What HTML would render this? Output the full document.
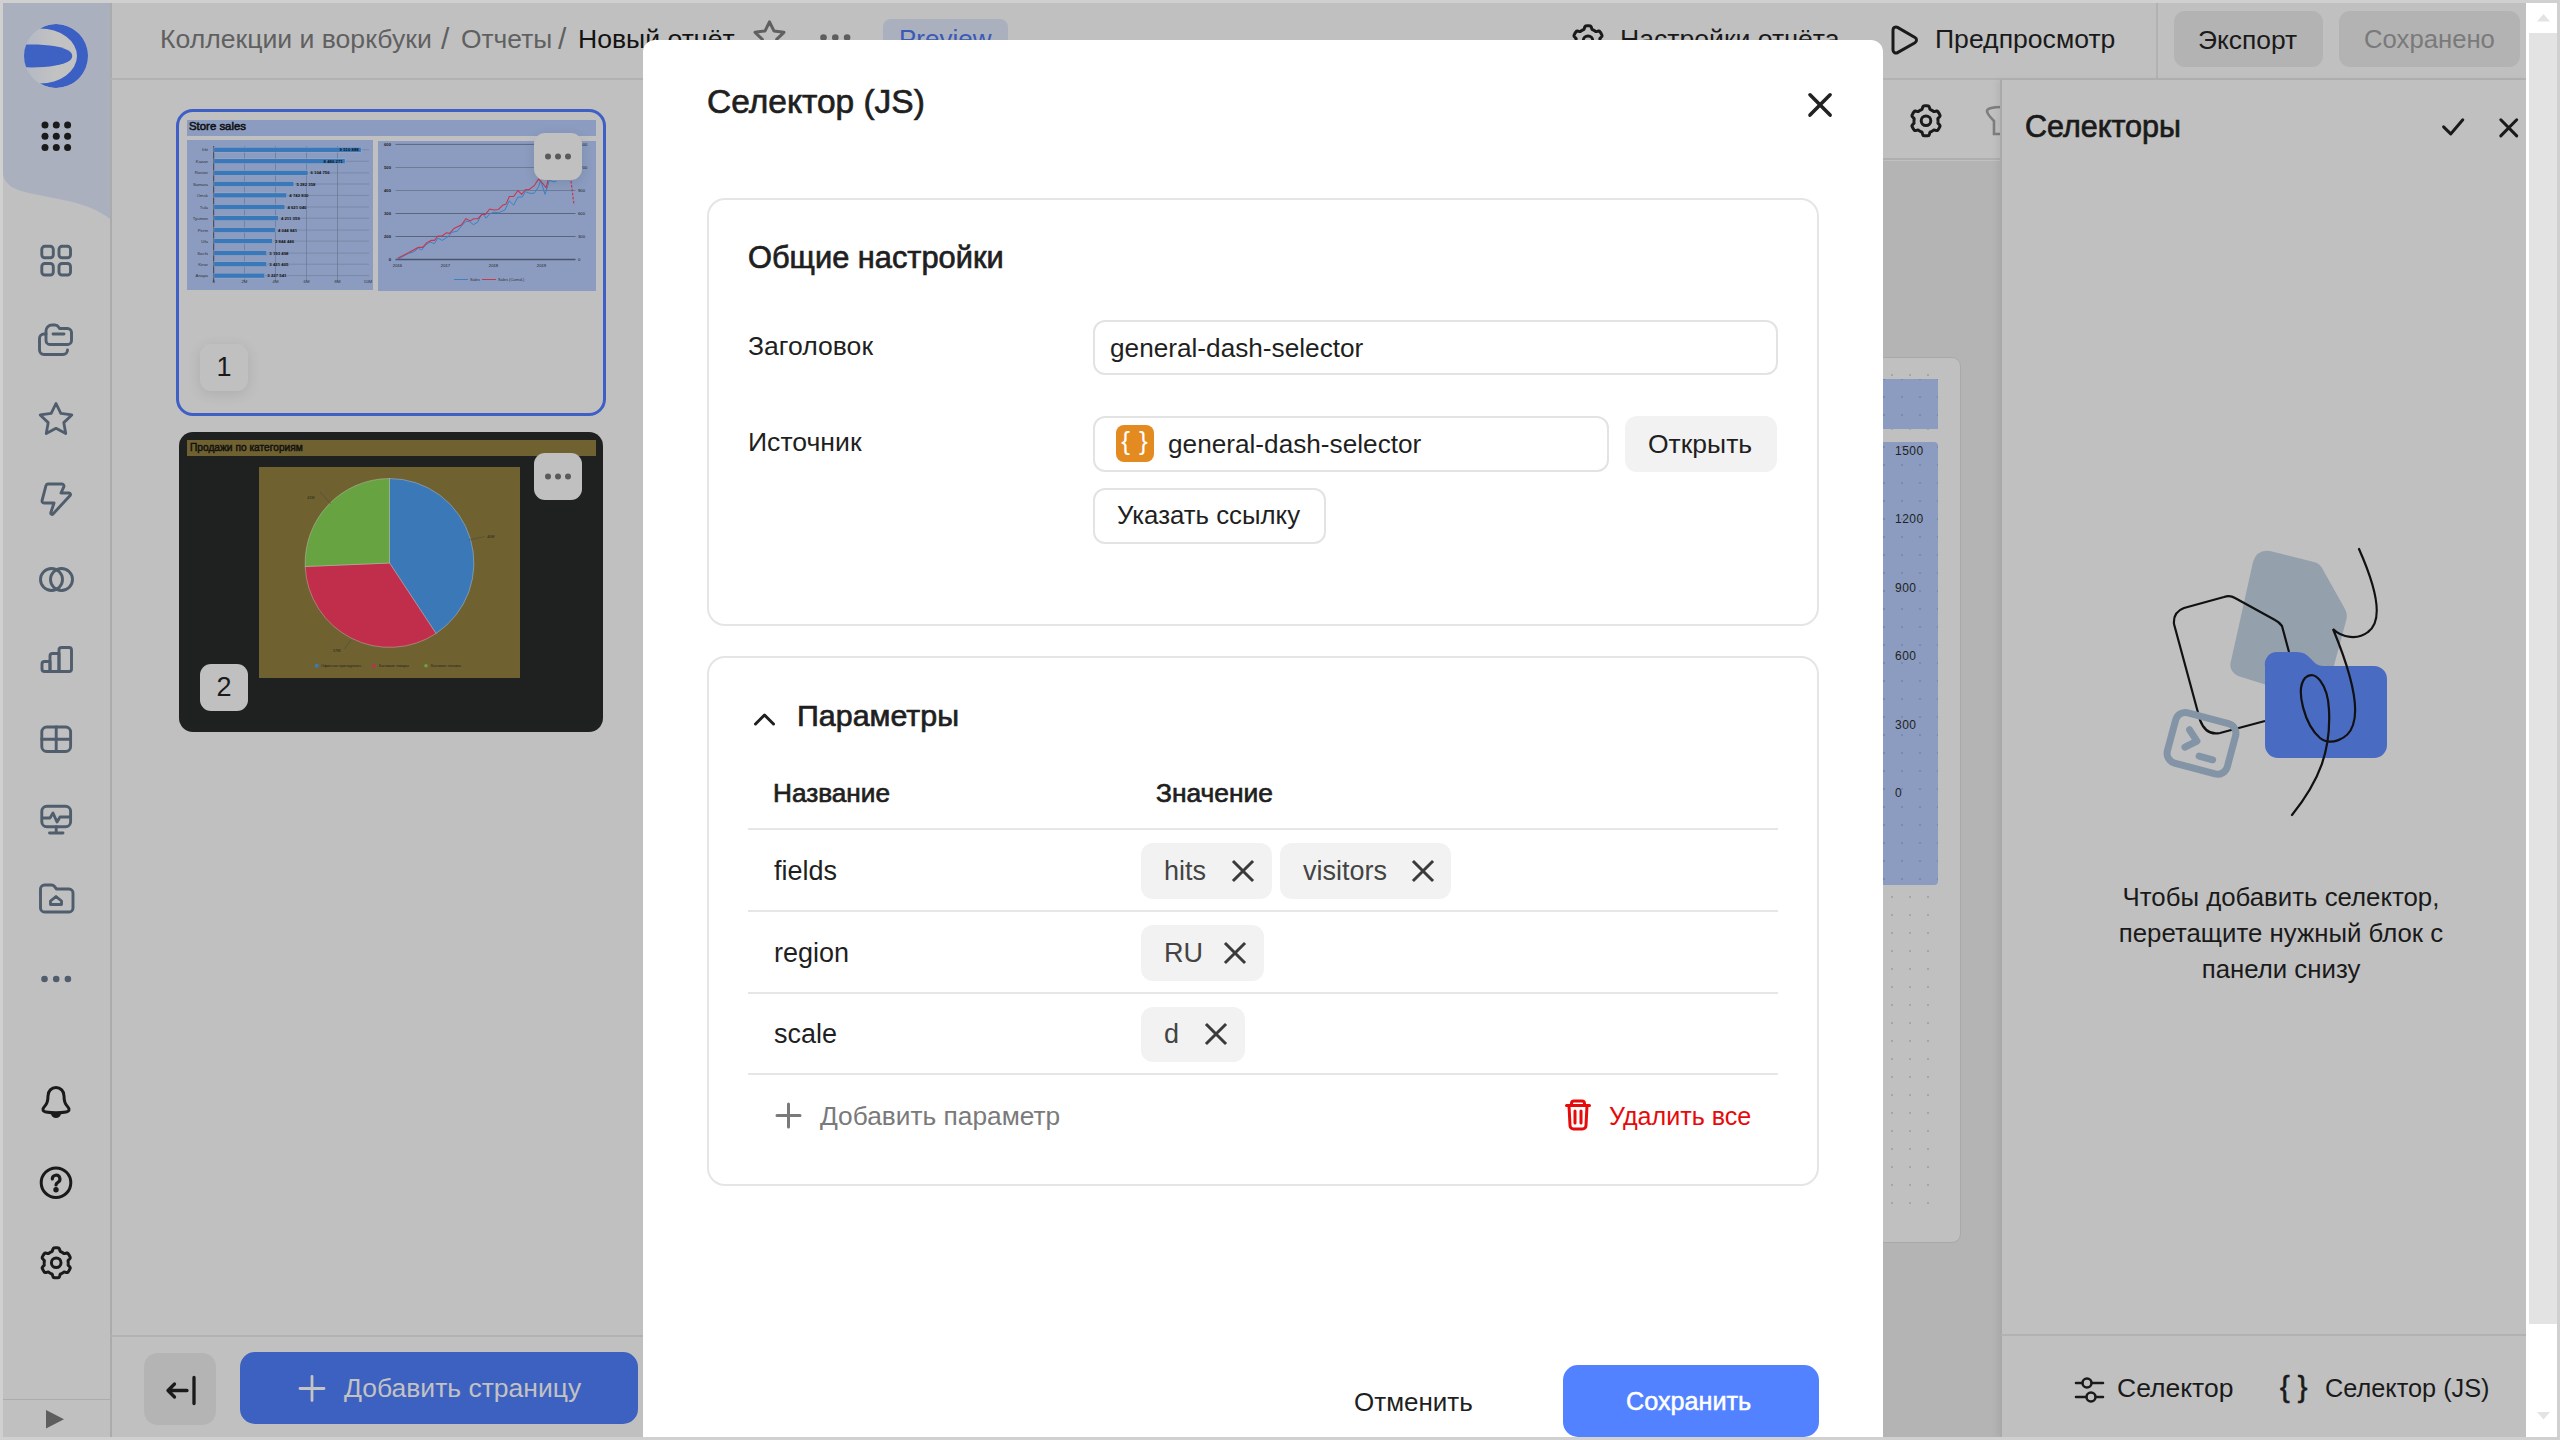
<!DOCTYPE html>
<html><head><meta charset="utf-8">
<style>
*{box-sizing:border-box}
html,body{margin:0;padding:0}
body{width:2560px;height:1440px;overflow:hidden;position:relative;background:#d0d0d0;font-family:"Liberation Sans",sans-serif;color:#1b1b1b}
.a{position:absolute}
.t{position:absolute;white-space:nowrap;line-height:1}
svg{position:absolute;overflow:visible}
.m{-webkit-text-stroke:0.7px currentColor}
</style></head><body>

<!-- app background -->
<div class="a" style="left:3px;top:3px;width:2523px;height:1434px;background:#c0c0c0"></div>

<!-- ============ SIDEBAR ============ -->
<svg style="left:0;top:0" width="112" height="230">
  <path d="M3,3 H110 V219 C100,211 86,205 68,201 L29,193 C16,190 5,186 3,174 Z" fill="#aab0be"/>
</svg>
<div class="a" style="left:110px;top:3px;width:2px;height:1434px;background:rgba(0,0,0,0.11)"></div>
<!-- logo -->
<svg style="left:24px;top:24px" width="64" height="64" viewBox="0 0 64 64">
  <defs><clipPath id="lc"><circle cx="32" cy="32" r="32"/></clipPath>
  <linearGradient id="lg" x1="0" y1="0" x2="1" y2="0"><stop offset="0" stop-color="#b3b8c4"/><stop offset="0.5" stop-color="#c2c2c2"/></linearGradient></defs>
  <g clip-path="url(#lc)">
    <rect width="64" height="64" fill="url(#lg)"/>
    <path d="M16,4.5 A32,32 0 1 1 16,59.5 A37,27.5 0 0 0 16,4.5 Z" fill="#3b5fc3"/>
    <path d="M-2,20.8 C18,19.8 40,22 46.5,28 Q50,32 46.5,36 C40,42 18,44.2 -2,43.2 Z" fill="#3d62c3"/>
  </g>
</svg>
<!-- apps dots -->
<svg style="left:0;top:0" width="112" height="160" fill="#1a1a1a">
  <circle cx="45" cy="125" r="3.5"/><circle cx="56.3" cy="125" r="3.5"/><circle cx="67.6" cy="125" r="3.5"/>
  <circle cx="45" cy="136.3" r="3.5"/><circle cx="56.3" cy="136.3" r="3.5"/><circle cx="67.6" cy="136.3" r="3.5"/>
  <circle cx="45" cy="147.6" r="3.5"/><circle cx="56.3" cy="147.6" r="3.5"/><circle cx="67.6" cy="147.6" r="3.5"/>
</svg>

<!-- sidebar icons -->
<svg style="left:0;top:0" width="112" height="1440" fill="none" stroke="#4f5d6c" stroke-width="2.9" stroke-linecap="round" stroke-linejoin="round">
  <!-- grid -->
  <rect x="41.8" y="246.3" width="11.5" height="11.5" rx="3"/>
  <rect x="59" y="246.3" width="11.5" height="11.5" rx="3"/>
  <rect x="41.8" y="263.5" width="11.5" height="11.5" rx="3"/>
  <rect x="59" y="263.5" width="11.5" height="11.5" rx="3"/>
  <!-- collections -->
  <path d="M46,332 V331 a6,6 0 0 1 6,-6 h3 a4,4 0 0 1 3.5,2 l1,1.5 h8 a4,4 0 0 1 4,4 v8 a4,4 0 0 1 -4,4 h-17.5 a4,4 0 0 1 -4,-4 z"/>
  <path d="M46,334 h-2 a4.5,4.5 0 0 0 -4.5,4.5 v11.5 a4.5,4.5 0 0 0 4.5,4.5 h19 a4.5,4.5 0 0 0 4.5,-4.5"/>
  <path d="M53,334 h11"/>
  <!-- star -->
  <path d="M56.00,403.50 L60.82,413.47 L71.79,414.97 L63.80,422.63 L65.76,433.53 L56.00,428.30 L46.24,433.53 L48.20,422.63 L40.21,414.97 L51.18,413.47 Z" stroke-width="2.8"/>
  <!-- bolt -->
  <path d="M48,484 H62 a2,2 0 0 1 1.8,2.8 L61,493 H69 a1.5,1.5 0 0 1 1.1,2.5 L53,514 a1.3,1.3 0 0 1 -2.2,-1.2 L54,503 H44 a2,2 0 0 1 -1.9,-2.6 L46,485.5 a2,2 0 0 1 2,-1.5 Z"/>
  <!-- rings -->
  <circle cx="51.5" cy="579.5" r="11"/><circle cx="61.5" cy="579.5" r="11"/>
  <!-- bars -->
  <path d="M42,664 a2.5,2.5 0 0 1 2.5,-2.5 H50 V671.5 H44.5 a2.5,2.5 0 0 1 -2.5,-2.5 Z"/>
  <path d="M50,671.5 V656 a2.5,2.5 0 0 1 2.5,-2.5 H59 V671.5 Z"/>
  <path d="M59,671.5 V650 a2.5,2.5 0 0 1 2.5,-2.5 H69 a2.5,2.5 0 0 1 2.5,2.5 V669 a2.5,2.5 0 0 1 -2.5,2.5 Z"/>
  <!-- table grid -->
  <rect x="41.8" y="727" width="28.8" height="24.5" rx="5"/>
  <path d="M56.2,727 V751.5 M41.8,739.3 H70.6"/>
  <!-- monitor -->
  <rect x="41.8" y="806.3" width="28.8" height="20.5" rx="5"/>
  <path d="M56.2,826.8 V833 M49.5,833 H63 M42.5,818 H50 L53,813 L57,822 L60,817 H70"/>
  <!-- folder -->
  <path d="M40.5,889 a4,4 0 0 1 4,-4 h7 a4,4 0 0 1 3,1.5 l2,2.5 h12.5 a4,4 0 0 1 4,4 v15 a4,4 0 0 1 -4,4 h-24.5 a4,4 0 0 1 -4,-4 z"/>
  <path d="M50.5,904.5 V901 L56,896.5 L61.5,901 V904.5 Z"/>
</svg>
<svg style="left:0;top:0" width="112" height="1000" fill="#4f5d6c">
  <circle cx="44.5" cy="979" r="3.3"/><circle cx="56.2" cy="979" r="3.3"/><circle cx="67.9" cy="979" r="3.3"/>
</svg>
<!-- bottom sidebar icons -->
<svg style="left:0;top:0" width="112" height="1440" fill="none" stroke="#1a1a1a" stroke-width="3" stroke-linecap="round" stroke-linejoin="round">
  <path d="M44.5,1106.5 C47.5,1103.5 48,1100 48,1096 C48,1091 51.5,1087.5 56,1087.5 C60.5,1087.5 64,1091 64,1096 C64,1100 64.5,1103.5 67.5,1106.5 C70,1109 69.5,1111.5 66,1112 C60,1113 52,1113 46,1112 C42.5,1111.5 42,1109 44.5,1106.5 Z"/>
  <path d="M52.5,1113.5 a3.5,3 0 0 0 7,0 Z" fill="#1a1a1a"/>
  <circle cx="56" cy="1182.7" r="14.8"/>
  <path d="M52.3,1179 a3.8,3.8 0 1 1 5.6,3.3 c-1.2,0.7 -1.9,1.3 -1.9,2.7" stroke-width="3.2"/>
  <circle cx="56" cy="1189.8" r="1.2" fill="#1a1a1a"/>
  <path d="M68.20,1262.80 L68.20,1263.01 L68.19,1263.22 L68.18,1263.43 L68.17,1263.64 L68.15,1263.85 L68.13,1264.05 L68.11,1264.26 L68.08,1264.47 L68.05,1264.68 L68.07,1264.89 L68.18,1265.13 L68.37,1265.39 L68.62,1265.67 L68.92,1265.97 L69.24,1266.29 L69.55,1266.63 L69.83,1266.97 L70.05,1267.30 L70.19,1267.62 L70.25,1267.91 L70.20,1268.18 L70.11,1268.42 L70.01,1268.66 L69.90,1268.90 L69.79,1269.14 L69.68,1269.38 L69.57,1269.61 L69.44,1269.84 L69.32,1270.07 L69.19,1270.30 L69.06,1270.53 L68.92,1270.75 L68.78,1270.97 L68.64,1271.19 L68.49,1271.40 L68.34,1271.62 L68.18,1271.83 L68.02,1272.03 L67.86,1272.24 L67.65,1272.41 L67.37,1272.51 L67.02,1272.54 L66.62,1272.52 L66.19,1272.45 L65.75,1272.35 L65.31,1272.23 L64.90,1272.12 L64.52,1272.04 L64.20,1272.01 L63.95,1272.03 L63.75,1272.13 L63.59,1272.26 L63.42,1272.38 L63.25,1272.51 L63.08,1272.63 L62.91,1272.75 L62.74,1272.86 L62.56,1272.98 L62.38,1273.09 L62.20,1273.19 L62.02,1273.30 L61.83,1273.40 L61.65,1273.49 L61.46,1273.59 L61.27,1273.68 L61.08,1273.76 L60.89,1273.85 L60.70,1273.93 L60.50,1274.00 L60.32,1274.12 L60.17,1274.34 L60.04,1274.63 L59.93,1274.99 L59.81,1275.40 L59.69,1275.84 L59.56,1276.28 L59.41,1276.68 L59.23,1277.04 L59.02,1277.33 L58.80,1277.52 L58.55,1277.62 L58.29,1277.65 L58.03,1277.69 L57.77,1277.72 L57.51,1277.74 L57.25,1277.76 L56.99,1277.78 L56.72,1277.79 L56.46,1277.80 L56.20,1277.80 L55.94,1277.80 L55.68,1277.79 L55.41,1277.78 L55.15,1277.76 L54.89,1277.74 L54.63,1277.72 L54.37,1277.69 L54.11,1277.65 L53.85,1277.62 L53.60,1277.52 L53.38,1277.33 L53.17,1277.04 L52.99,1276.68 L52.84,1276.28 L52.71,1275.84 L52.59,1275.40 L52.47,1274.99 L52.36,1274.63 L52.23,1274.34 L52.08,1274.12 L51.90,1274.00 L51.70,1273.93 L51.51,1273.85 L51.32,1273.76 L51.13,1273.68 L50.94,1273.59 L50.75,1273.49 L50.57,1273.40 L50.38,1273.30 L50.20,1273.19 L50.02,1273.09 L49.84,1272.98 L49.66,1272.86 L49.49,1272.75 L49.32,1272.63 L49.15,1272.51 L48.98,1272.38 L48.81,1272.26 L48.65,1272.13 L48.45,1272.03 L48.20,1272.01 L47.88,1272.04 L47.50,1272.12 L47.09,1272.23 L46.65,1272.35 L46.21,1272.45 L45.78,1272.52 L45.38,1272.54 L45.03,1272.51 L44.75,1272.41 L44.54,1272.24 L44.38,1272.03 L44.22,1271.83 L44.06,1271.62 L43.91,1271.40 L43.76,1271.19 L43.62,1270.97 L43.48,1270.75 L43.34,1270.53 L43.21,1270.30 L43.08,1270.07 L42.96,1269.84 L42.83,1269.61 L42.72,1269.38 L42.61,1269.14 L42.50,1268.90 L42.39,1268.66 L42.29,1268.42 L42.20,1268.18 L42.15,1267.91 L42.21,1267.62 L42.35,1267.30 L42.57,1266.97 L42.85,1266.63 L43.16,1266.29 L43.48,1265.97 L43.78,1265.67 L44.03,1265.39 L44.22,1265.13 L44.33,1264.89 L44.35,1264.68 L44.32,1264.47 L44.29,1264.26 L44.27,1264.05 L44.25,1263.85 L44.23,1263.64 L44.22,1263.43 L44.21,1263.22 L44.20,1263.01 L44.20,1262.80 L44.20,1262.59 L44.21,1262.38 L44.22,1262.17 L44.23,1261.96 L44.25,1261.75 L44.27,1261.55 L44.29,1261.34 L44.32,1261.13 L44.35,1260.92 L44.33,1260.71 L44.22,1260.47 L44.03,1260.21 L43.78,1259.93 L43.48,1259.63 L43.16,1259.31 L42.85,1258.97 L42.57,1258.63 L42.35,1258.30 L42.21,1257.98 L42.15,1257.69 L42.20,1257.42 L42.29,1257.18 L42.39,1256.94 L42.50,1256.70 L42.61,1256.46 L42.72,1256.22 L42.83,1255.99 L42.96,1255.76 L43.08,1255.53 L43.21,1255.30 L43.34,1255.07 L43.48,1254.85 L43.62,1254.63 L43.76,1254.41 L43.91,1254.20 L44.06,1253.98 L44.22,1253.77 L44.38,1253.57 L44.54,1253.36 L44.75,1253.19 L45.03,1253.09 L45.38,1253.06 L45.78,1253.08 L46.21,1253.15 L46.65,1253.25 L47.09,1253.37 L47.50,1253.48 L47.88,1253.56 L48.20,1253.59 L48.45,1253.57 L48.65,1253.47 L48.81,1253.34 L48.98,1253.22 L49.15,1253.09 L49.32,1252.97 L49.49,1252.85 L49.66,1252.74 L49.84,1252.62 L50.02,1252.51 L50.20,1252.41 L50.38,1252.30 L50.57,1252.20 L50.75,1252.11 L50.94,1252.01 L51.13,1251.92 L51.32,1251.84 L51.51,1251.75 L51.70,1251.67 L51.90,1251.60 L52.08,1251.48 L52.23,1251.26 L52.36,1250.97 L52.47,1250.61 L52.59,1250.20 L52.71,1249.76 L52.84,1249.32 L52.99,1248.92 L53.17,1248.56 L53.38,1248.27 L53.60,1248.08 L53.85,1247.98 L54.11,1247.95 L54.37,1247.91 L54.63,1247.88 L54.89,1247.86 L55.15,1247.84 L55.41,1247.82 L55.68,1247.81 L55.94,1247.80 L56.20,1247.80 L56.46,1247.80 L56.72,1247.81 L56.99,1247.82 L57.25,1247.84 L57.51,1247.86 L57.77,1247.88 L58.03,1247.91 L58.29,1247.95 L58.55,1247.98 L58.80,1248.08 L59.02,1248.27 L59.23,1248.56 L59.41,1248.92 L59.56,1249.32 L59.69,1249.76 L59.81,1250.20 L59.93,1250.61 L60.04,1250.97 L60.17,1251.26 L60.32,1251.48 L60.50,1251.60 L60.70,1251.67 L60.89,1251.75 L61.08,1251.84 L61.27,1251.92 L61.46,1252.01 L61.65,1252.11 L61.83,1252.20 L62.02,1252.30 L62.20,1252.41 L62.38,1252.51 L62.56,1252.62 L62.74,1252.74 L62.91,1252.85 L63.08,1252.97 L63.25,1253.09 L63.42,1253.22 L63.59,1253.34 L63.75,1253.47 L63.95,1253.57 L64.20,1253.59 L64.52,1253.56 L64.90,1253.48 L65.31,1253.37 L65.75,1253.25 L66.19,1253.15 L66.62,1253.08 L67.02,1253.06 L67.37,1253.09 L67.65,1253.19 L67.86,1253.36 L68.02,1253.57 L68.18,1253.77 L68.34,1253.98 L68.49,1254.20 L68.64,1254.41 L68.78,1254.63 L68.92,1254.85 L69.06,1255.07 L69.19,1255.30 L69.32,1255.53 L69.44,1255.76 L69.57,1255.99 L69.68,1256.22 L69.79,1256.46 L69.90,1256.70 L70.01,1256.94 L70.11,1257.18 L70.20,1257.42 L70.25,1257.69 L70.19,1257.98 L70.05,1258.30 L69.83,1258.63 L69.55,1258.97 L69.24,1259.31 L68.92,1259.63 L68.62,1259.93 L68.37,1260.21 L68.18,1260.47 L68.07,1260.71 L68.05,1260.92 L68.08,1261.13 L68.11,1261.34 L68.13,1261.55 L68.15,1261.75 L68.17,1261.96 L68.18,1262.17 L68.19,1262.38 L68.20,1262.59 Z"/>
  <circle cx="56.2" cy="1262.8" r="4.8"/>
</svg>
<div class="a" style="left:3px;top:1399px;width:108px;height:1px;background:#acacac"></div>
<svg style="left:0;top:0" width="112" height="1440"><path d="M46,1410 L64,1419.3 L46,1428.6 Z" fill="#5e5e5e"/></svg>

<!-- ============ HEADER ============ -->
<div class="a" style="left:111px;top:78px;width:2415px;height:2px;background:#b2b2b2"></div>
<div class="a" style="left:2156px;top:3px;width:2px;height:76px;background:#b2b2b2"></div>
<div class="t" style="left:160px;top:26px;font-size:26.6px;color:#606060">Коллекции и воркбуки</div>
<div class="t" style="left:441px;top:24px;font-size:30px;color:#606060">/</div>
<div class="t" style="left:461px;top:26px;font-size:26.4px;color:#606060">Отчеты</div>
<div class="t" style="left:558px;top:24px;font-size:30px;color:#606060">/</div>
<div class="t" style="left:578px;top:26px;font-size:26.6px;color:#131313">Новый отчёт</div>
<svg style="left:750px;top:18px" width="40" height="40" fill="none" stroke="#606060" stroke-width="3" stroke-linejoin="round">
  <path d="M19.50,3.80 L23.91,12.93 L33.96,14.30 L26.63,21.32 L28.43,31.30 L19.50,26.50 L10.57,31.30 L12.37,21.32 L5.04,14.30 L15.09,12.93 Z"/>
</svg>
<svg style="left:0;top:0" width="900" height="60" fill="#5e5e5e">
  <circle cx="823.5" cy="37.5" r="3.3"/><circle cx="835.3" cy="37.5" r="3.3"/><circle cx="847.1" cy="37.5" r="3.3"/>
</svg>
<div class="a" style="left:883px;top:19px;width:125px;height:44px;border-radius:8px;background:#aab0be"></div>
<div class="t" style="left:899px;top:26px;font-size:26px;color:#3a5ab5">Preview</div>

<svg style="left:1572px;top:24px" width="32" height="32" fill="none" stroke="#1a1a1a" stroke-width="3" stroke-linejoin="round">
  <path d="M28.00,16.80 L28.00,17.01 L27.99,17.22 L27.98,17.43 L27.97,17.64 L27.95,17.85 L27.93,18.05 L27.91,18.26 L27.88,18.47 L27.85,18.68 L27.87,18.89 L27.98,19.13 L28.17,19.39 L28.42,19.67 L28.72,19.97 L29.04,20.29 L29.35,20.63 L29.63,20.97 L29.85,21.30 L29.99,21.62 L30.05,21.91 L30.00,22.18 L29.91,22.42 L29.81,22.66 L29.70,22.90 L29.59,23.14 L29.48,23.38 L29.37,23.61 L29.24,23.84 L29.12,24.07 L28.99,24.30 L28.86,24.53 L28.72,24.75 L28.58,24.97 L28.44,25.19 L28.29,25.40 L28.14,25.62 L27.98,25.83 L27.82,26.03 L27.66,26.24 L27.45,26.41 L27.17,26.51 L26.82,26.54 L26.42,26.52 L25.99,26.45 L25.55,26.35 L25.11,26.23 L24.70,26.12 L24.32,26.04 L24.00,26.01 L23.75,26.03 L23.55,26.13 L23.39,26.26 L23.22,26.38 L23.05,26.51 L22.88,26.63 L22.71,26.75 L22.54,26.86 L22.36,26.98 L22.18,27.09 L22.00,27.19 L21.82,27.30 L21.63,27.40 L21.45,27.49 L21.26,27.59 L21.07,27.68 L20.88,27.76 L20.69,27.85 L20.50,27.93 L20.30,28.00 L20.12,28.12 L19.97,28.34 L19.84,28.63 L19.73,28.99 L19.61,29.40 L19.49,29.84 L19.36,30.28 L19.21,30.68 L19.03,31.04 L18.82,31.33 L18.60,31.52 L18.35,31.62 L18.09,31.65 L17.83,31.69 L17.57,31.72 L17.31,31.74 L17.05,31.76 L16.79,31.78 L16.52,31.79 L16.26,31.80 L16.00,31.80 L15.74,31.80 L15.48,31.79 L15.21,31.78 L14.95,31.76 L14.69,31.74 L14.43,31.72 L14.17,31.69 L13.91,31.65 L13.65,31.62 L13.40,31.52 L13.18,31.33 L12.97,31.04 L12.79,30.68 L12.64,30.28 L12.51,29.84 L12.39,29.40 L12.27,28.99 L12.16,28.63 L12.03,28.34 L11.88,28.12 L11.70,28.00 L11.50,27.93 L11.31,27.85 L11.12,27.76 L10.93,27.68 L10.74,27.59 L10.55,27.49 L10.37,27.40 L10.18,27.30 L10.00,27.19 L9.82,27.09 L9.64,26.98 L9.46,26.86 L9.29,26.75 L9.12,26.63 L8.95,26.51 L8.78,26.38 L8.61,26.26 L8.45,26.13 L8.25,26.03 L8.00,26.01 L7.68,26.04 L7.30,26.12 L6.89,26.23 L6.45,26.35 L6.01,26.45 L5.58,26.52 L5.18,26.54 L4.83,26.51 L4.55,26.41 L4.34,26.24 L4.18,26.03 L4.02,25.83 L3.86,25.62 L3.71,25.40 L3.56,25.19 L3.42,24.97 L3.28,24.75 L3.14,24.53 L3.01,24.30 L2.88,24.07 L2.76,23.84 L2.63,23.61 L2.52,23.38 L2.41,23.14 L2.30,22.90 L2.19,22.66 L2.09,22.42 L2.00,22.18 L1.95,21.91 L2.01,21.62 L2.15,21.30 L2.37,20.97 L2.65,20.63 L2.96,20.29 L3.28,19.97 L3.58,19.67 L3.83,19.39 L4.02,19.13 L4.13,18.89 L4.15,18.68 L4.12,18.47 L4.09,18.26 L4.07,18.05 L4.05,17.85 L4.03,17.64 L4.02,17.43 L4.01,17.22 L4.00,17.01 L4.00,16.80 L4.00,16.59 L4.01,16.38 L4.02,16.17 L4.03,15.96 L4.05,15.75 L4.07,15.55 L4.09,15.34 L4.12,15.13 L4.15,14.92 L4.13,14.71 L4.02,14.47 L3.83,14.21 L3.58,13.93 L3.28,13.63 L2.96,13.31 L2.65,12.97 L2.37,12.63 L2.15,12.30 L2.01,11.98 L1.95,11.69 L2.00,11.42 L2.09,11.18 L2.19,10.94 L2.30,10.70 L2.41,10.46 L2.52,10.22 L2.63,9.99 L2.76,9.76 L2.88,9.53 L3.01,9.30 L3.14,9.07 L3.28,8.85 L3.42,8.63 L3.56,8.41 L3.71,8.20 L3.86,7.98 L4.02,7.77 L4.18,7.57 L4.34,7.36 L4.55,7.19 L4.83,7.09 L5.18,7.06 L5.58,7.08 L6.01,7.15 L6.45,7.25 L6.89,7.37 L7.30,7.48 L7.68,7.56 L8.00,7.59 L8.25,7.57 L8.45,7.47 L8.61,7.34 L8.78,7.22 L8.95,7.09 L9.12,6.97 L9.29,6.85 L9.46,6.74 L9.64,6.62 L9.82,6.51 L10.00,6.41 L10.18,6.30 L10.37,6.20 L10.55,6.11 L10.74,6.01 L10.93,5.92 L11.12,5.84 L11.31,5.75 L11.50,5.67 L11.70,5.60 L11.88,5.48 L12.03,5.26 L12.16,4.97 L12.27,4.61 L12.39,4.20 L12.51,3.76 L12.64,3.32 L12.79,2.92 L12.97,2.56 L13.18,2.27 L13.40,2.08 L13.65,1.98 L13.91,1.95 L14.17,1.91 L14.43,1.88 L14.69,1.86 L14.95,1.84 L15.21,1.82 L15.48,1.81 L15.74,1.80 L16.00,1.80 L16.26,1.80 L16.52,1.81 L16.79,1.82 L17.05,1.84 L17.31,1.86 L17.57,1.88 L17.83,1.91 L18.09,1.95 L18.35,1.98 L18.60,2.08 L18.82,2.27 L19.03,2.56 L19.21,2.92 L19.36,3.32 L19.49,3.76 L19.61,4.20 L19.73,4.61 L19.84,4.97 L19.97,5.26 L20.12,5.48 L20.30,5.60 L20.50,5.67 L20.69,5.75 L20.88,5.84 L21.07,5.92 L21.26,6.01 L21.45,6.11 L21.63,6.20 L21.82,6.30 L22.00,6.41 L22.18,6.51 L22.36,6.62 L22.54,6.74 L22.71,6.85 L22.88,6.97 L23.05,7.09 L23.22,7.22 L23.39,7.34 L23.55,7.47 L23.75,7.57 L24.00,7.59 L24.32,7.56 L24.70,7.48 L25.11,7.37 L25.55,7.25 L25.99,7.15 L26.42,7.08 L26.82,7.06 L27.17,7.09 L27.45,7.19 L27.66,7.36 L27.82,7.57 L27.98,7.77 L28.14,7.98 L28.29,8.20 L28.44,8.41 L28.58,8.63 L28.72,8.85 L28.86,9.07 L28.99,9.30 L29.12,9.53 L29.24,9.76 L29.37,9.99 L29.48,10.22 L29.59,10.46 L29.70,10.70 L29.81,10.94 L29.91,11.18 L30.00,11.42 L30.05,11.69 L29.99,11.98 L29.85,12.30 L29.63,12.63 L29.35,12.97 L29.04,13.31 L28.72,13.63 L28.42,13.93 L28.17,14.21 L27.98,14.47 L27.87,14.71 L27.85,14.92 L27.88,15.13 L27.91,15.34 L27.93,15.55 L27.95,15.75 L27.97,15.96 L27.98,16.17 L27.99,16.38 L28.00,16.59 Z"/>
  <circle cx="16" cy="16.8" r="4.8"/>
</svg>
<div class="t" style="left:1620px;top:26px;font-size:26.6px;color:#1a1a1a">Настройки отчёта</div>
<svg style="left:1888px;top:23px" width="34" height="36" fill="none" stroke="#1a1a1a" stroke-width="3" stroke-linejoin="round">
  <path d="M5,7 a3,3 0 0 1 4.5,-2.6 L27,14.5 a3,3 0 0 1 0,5.2 L9.5,29.6 A3,3 0 0 1 5,27 Z"/>
</svg>
<div class="t" style="left:1935px;top:26px;font-size:26.6px;color:#1a1a1a">Предпросмотр</div>
<div class="a" style="left:2174px;top:11px;width:149px;height:56px;border-radius:11px;background:#b3b3b3"></div>
<div class="t" style="left:2198px;top:27px;font-size:26.4px;color:#1a1a1a">Экспорт</div>
<div class="a" style="left:2339px;top:11px;width:181px;height:56px;border-radius:11px;background:#b3b3b3"></div>
<div class="t" style="left:2364px;top:27px;font-size:25.7px;color:#7a7a7a">Сохранено</div>

<!-- ============ LEFT PAGES PANEL ============ -->
<!-- card 1 -->
<div class="a" style="left:176px;top:109px;width:430px;height:307px;border:3px solid #3d5fc6;border-radius:17px;background:#c0c0c0"></div>
<div class="a" style="left:187px;top:120px;width:409px;height:16px;background:#8b9cc0"></div>
<div class="t m" style="left:189px;top:121px;font-size:11.4px;-webkit-text-stroke:0.55px #111;color:#111">Store sales</div>
<div class="a" style="left:187px;top:140px;width:186px;height:150px;background:#8b9cc0"></div>
<div class="a" style="left:378px;top:141px;width:218px;height:150px;background:#8b9cc0"></div>
<svg style="left:187px;top:140px" width="186" height="150">
<line x1="57.4" y1="6" x2="57.4" y2="142" stroke="#59647a" stroke-width="0.6" opacity="0.8"/>
<line x1="88.5" y1="6" x2="88.5" y2="142" stroke="#59647a" stroke-width="0.6" opacity="0.8"/>
<line x1="119.6" y1="6" x2="119.6" y2="142" stroke="#59647a" stroke-width="0.6" opacity="0.8"/>
<line x1="150.5" y1="6" x2="150.5" y2="142" stroke="#59647a" stroke-width="0.6" opacity="0.8"/>
<line x1="174.1" y1="9.7" x2="182" y2="9.7" stroke="#6b7690" stroke-width="0.5"/>
<line x1="158.1" y1="21.3" x2="182" y2="21.3" stroke="#6b7690" stroke-width="0.5"/>
<line x1="121.0" y1="32.9" x2="182" y2="32.9" stroke="#6b7690" stroke-width="0.5"/>
<line x1="106.9" y1="44.0" x2="182" y2="44.0" stroke="#6b7690" stroke-width="0.5"/>
<line x1="99.8" y1="55.4" x2="182" y2="55.4" stroke="#6b7690" stroke-width="0.5"/>
<line x1="97.9" y1="67.0" x2="182" y2="67.0" stroke="#6b7690" stroke-width="0.5"/>
<line x1="91.4" y1="78.2" x2="182" y2="78.2" stroke="#6b7690" stroke-width="0.5"/>
<line x1="88.5" y1="90.1" x2="182" y2="90.1" stroke="#6b7690" stroke-width="0.5"/>
<line x1="85.5" y1="101.1" x2="182" y2="101.1" stroke="#6b7690" stroke-width="0.5"/>
<line x1="79.8" y1="113.1" x2="182" y2="113.1" stroke="#6b7690" stroke-width="0.5"/>
<line x1="79.8" y1="124.2" x2="182" y2="124.2" stroke="#6b7690" stroke-width="0.5"/>
<line x1="77.8" y1="135.6" x2="182" y2="135.6" stroke="#6b7690" stroke-width="0.5"/>
<line x1="26.7" y1="6" x2="26.7" y2="142" stroke="#2a2a2a" stroke-width="0.8"/>
<g font-family="Liberation Sans" font-size="4.3" fill="#111">
<rect x="26.9" y="7.25" width="147.2" height="4.9" fill="#3a78ba" stroke="#b9bfca" stroke-width="0.35"/>
<text x="152.6" y="11.2" font-weight="700">9 510 888</text>
<text x="21" y="11.2" text-anchor="end" fill="#333">Irkt</text>
<rect x="26.9" y="18.85" width="131.2" height="4.9" fill="#3a78ba" stroke="#b9bfca" stroke-width="0.35"/>
<text x="136.6" y="22.8" font-weight="700">8 480 271</text>
<text x="21" y="22.8" text-anchor="end" fill="#333">Kazan</text>
<rect x="26.9" y="30.45" width="94.1" height="4.9" fill="#3a78ba" stroke="#b9bfca" stroke-width="0.35"/>
<text x="123.5" y="34.4" font-weight="700">6 104 756</text>
<text x="21" y="34.4" text-anchor="end" fill="#333">Rostov</text>
<rect x="26.9" y="41.55" width="80.0" height="4.9" fill="#3a78ba" stroke="#b9bfca" stroke-width="0.35"/>
<text x="109.4" y="45.5" font-weight="700">5 282 358</text>
<text x="21" y="45.5" text-anchor="end" fill="#333">Samara</text>
<rect x="26.9" y="52.95" width="72.9" height="4.9" fill="#3a78ba" stroke="#b9bfca" stroke-width="0.35"/>
<text x="102.3" y="56.9" font-weight="700">4 742 830</text>
<text x="21" y="56.9" text-anchor="end" fill="#333">Omsk</text>
<rect x="26.9" y="64.55" width="71.0" height="4.9" fill="#3a78ba" stroke="#b9bfca" stroke-width="0.35"/>
<text x="100.4" y="68.5" font-weight="700">4 621 040</text>
<text x="21" y="68.5" text-anchor="end" fill="#333">Tula</text>
<rect x="26.9" y="75.75" width="64.5" height="4.9" fill="#3a78ba" stroke="#b9bfca" stroke-width="0.35"/>
<text x="93.9" y="79.7" font-weight="700">4 211 359</text>
<text x="21" y="79.7" text-anchor="end" fill="#333">Tyumen</text>
<rect x="26.9" y="87.65" width="61.6" height="4.9" fill="#3a78ba" stroke="#b9bfca" stroke-width="0.35"/>
<text x="91.0" y="91.6" font-weight="700">4 044 841</text>
<text x="21" y="91.6" text-anchor="end" fill="#333">Perm</text>
<rect x="26.9" y="98.65" width="58.6" height="4.9" fill="#3a78ba" stroke="#b9bfca" stroke-width="0.35"/>
<text x="88.0" y="102.6" font-weight="700">3 844 446</text>
<text x="21" y="102.6" text-anchor="end" fill="#333">Ufa</text>
<rect x="26.9" y="110.65" width="52.9" height="4.9" fill="#3a78ba" stroke="#b9bfca" stroke-width="0.35"/>
<text x="82.3" y="114.6" font-weight="700">3 193 498</text>
<text x="21" y="114.6" text-anchor="end" fill="#333">Sochi</text>
<rect x="26.9" y="121.75" width="52.9" height="4.9" fill="#3a78ba" stroke="#b9bfca" stroke-width="0.35"/>
<text x="82.3" y="125.7" font-weight="700">3 421 405</text>
<text x="21" y="125.7" text-anchor="end" fill="#333">Kirov</text>
<rect x="26.9" y="133.15" width="50.9" height="4.9" fill="#3a78ba" stroke="#b9bfca" stroke-width="0.35"/>
<text x="80.3" y="137.1" font-weight="700">3 227 541</text>
<text x="21" y="137.1" text-anchor="end" fill="#333">Anapa</text>
<text x="26.7" y="143.0" text-anchor="middle" fill="#333">0</text>
<text x="57.4" y="143.0" text-anchor="middle" fill="#333">2M</text>
<text x="88.5" y="143.0" text-anchor="middle" fill="#333">4M</text>
<text x="119.6" y="143.0" text-anchor="middle" fill="#333">6M</text>
<text x="150.5" y="143.0" text-anchor="middle" fill="#333">8M</text>
<text x="181.0" y="143.0" text-anchor="middle" fill="#333">10M</text>
</g>
</svg>
<svg style="left:378px;top:141px" width="218" height="150">
<line x1="17.5" y1="3.4" x2="197.5" y2="3.4" stroke="#4a5468" stroke-width="1.0" opacity="0.75"/>
<line x1="17.5" y1="26.5" x2="197.5" y2="26.5" stroke="#4a5468" stroke-width="0.6" opacity="0.75"/>
<line x1="17.5" y1="49.5" x2="197.5" y2="49.5" stroke="#4a5468" stroke-width="0.6" opacity="0.75"/>
<line x1="17.5" y1="72.5" x2="197.5" y2="72.5" stroke="#4a5468" stroke-width="1.0" opacity="0.75"/>
<line x1="17.5" y1="95.5" x2="197.5" y2="95.5" stroke="#4a5468" stroke-width="1.0" opacity="0.75"/>
<line x1="17.5" y1="118.5" x2="197.5" y2="118.5" stroke="#4a5468" stroke-width="1.5"/>
<path d="M19.7,118.3 L30.5,112.4 L35.9,110.8 L40.3,107.0 L43.5,109.1 L47.8,103.7 L52.2,101.0 L56.5,102.6 L59.8,97.2 L64.1,99.4 L69.5,96.1 L73.8,91.3 L79.3,90.2 L83.6,84.8 L87.9,80.4 L91.2,80.4 L95.5,83.7 L99.8,81.0 L104.2,71.8 L108.0,77.2 L111.8,72.8 L116.1,71.2 L120.4,71.8 L126.9,69.0 L131.3,59.8 L135.6,64.2 L139.9,56.0 L144.3,56.0 L147.5,50.6 L151.8,52.3 L156.2,52.3 L160.5,45.8 L162.7,39.3 L167.0,53.3 L169.2,46.8 L171.3,39.3 L175.7,40.9 L178.4,40.3" fill="none" stroke="#3b82c4" stroke-width="1"/>
<path d="M19.7,117.3 L30.5,111.8 L40.3,106.4 L44.6,106.4 L48.9,101.6 L53.3,99.4 L56.5,99.4 L59.8,95.0 L64.1,95.0 L68.4,91.8 L71.7,92.3 L76.0,87.5 L83.6,83.7 L87.9,77.7 L92.3,79.9 L95.5,77.7 L99.8,77.7 L104.2,73.4 L107.4,73.4 L111.8,68.0 L116.1,69.0 L120.4,68.5 L124.8,64.2 L128.0,63.1 L131.3,55.5 L135.6,55.5 L139.9,49.5 L143.7,53.3 L147.5,48.5 L151.3,48.5 L156.2,44.7 L160.5,38.2 L164.8,42.5 L168.1,46.8 L170.3,38.2 L173.5,29.5" fill="none" stroke="#c8364f" stroke-width="1.1"/>
<path d="M193,40 L194.5,52 L196,64" fill="none" stroke="#c8364f" stroke-width="1.2" stroke-dasharray="2.5,1.5"/>
<g font-family="Liberation Sans" font-size="4.2" fill="#222">
<text x="13" y="4.9" text-anchor="end" font-weight="700">600</text>
<text x="200" y="4.9">1500</text>
<text x="13" y="28.0" text-anchor="end" font-weight="700">500</text>
<text x="200" y="28.0">1200</text>
<text x="13" y="51.0" text-anchor="end" font-weight="700">400</text>
<text x="200" y="51.0">900</text>
<text x="13" y="74.0" text-anchor="end" font-weight="700">300</text>
<text x="200" y="74.0">600</text>
<text x="13" y="97.0" text-anchor="end" font-weight="700">200</text>
<text x="200" y="97.0">300</text>
<text x="13" y="120.0" text-anchor="end" font-weight="700">0</text>
<text x="200" y="120.0">0</text>
<text x="19.5" y="125.5" text-anchor="middle">2016</text>
<text x="67.5" y="125.5" text-anchor="middle">2017</text>
<text x="115.5" y="125.5" text-anchor="middle">2018</text>
<text x="163.5" y="125.5" text-anchor="middle">2019</text>
</g>
<line x1="76" y1="138.5" x2="90" y2="138.5" stroke="#3b82c4" stroke-width="1"/>
<line x1="104" y1="138.5" x2="118" y2="138.5" stroke="#c8364f" stroke-width="1"/>
<g font-family="Liberation Sans" font-size="4" fill="#333"><text x="92" y="140">Sales</text><text x="120" y="140">Sales (Cumul.)</text></g>
</svg>
<div class="a" style="left:534px;top:133px;width:48px;height:47px;border-radius:11px;background:#c0c0c0;box-shadow:0 3px 12px rgba(0,0,0,0.10)"></div>
<svg style="left:534px;top:133px" width="48" height="47" fill="#5a5a5a"><circle cx="14" cy="23.5" r="3"/><circle cx="24" cy="23.5" r="3"/><circle cx="34" cy="23.5" r="3"/></svg>
<div class="a" style="left:200px;top:344px;width:48px;height:47px;border-radius:11px;background:#c0c0c0;box-shadow:0 3px 14px rgba(0,0,0,0.10)"></div>
<div class="t" style="left:200px;top:354px;width:48px;text-align:center;font-size:27px;color:#1a1a1a">1</div>

<!-- card 2 -->
<div class="a" style="left:179px;top:432px;width:424px;height:300px;border-radius:14px;background:#1f2020"></div>
<div class="a" style="left:187px;top:440px;width:409px;height:16px;background:#6f6230"></div>
<div class="t" style="left:190px;top:443px;font-size:10.2px;-webkit-text-stroke:0.45px #111;color:#111">Продажи по категориям</div>
<div class="a" style="left:259px;top:467px;width:261px;height:211px;background:#6f6230"></div>
<svg style="left:259px;top:467px" width="261" height="211" viewBox="0 0 261 211">
  <g transform="translate(130.5,96)">
    <path d="M0,0 L0,-84.5 A84.5,84.5 0 0 1 46.5,70.5 Z" fill="#3b78b8" stroke="#cfcfcf" stroke-width="0.4"/>
    <path d="M0,0 L46.5,70.5 A84.5,84.5 0 0 1 -84.3,3.5 Z" fill="#c02e4b" stroke="#cfcfcf" stroke-width="0.4"/>
    <path d="M0,0 L-84.3,3.5 A84.5,84.5 0 0 1 0,-84.5 Z" fill="#67a341" stroke="#cfcfcf" stroke-width="0.4"/>
  </g>
  <rect x="56" y="197" width="3.5" height="3.5" fill="#3b78b8"/>
  <circle cx="115" cy="198.8" r="1.8" fill="#c02e4b"/>
  <circle cx="167" cy="198.8" r="1.8" fill="#67a341"/>
  <g font-family="Liberation Sans" font-size="3.8" fill="#222">
   <text x="62" y="200.3">Офисные принадлежн.</text>
   <text x="120" y="200.3">Бытовые товары</text>
   <text x="172" y="200.3">Бытовая техника</text>
   <text x="48" y="32">41M</text><text x="228" y="71">40M</text><text x="74" y="185">57M</text>
  </g>
  <path d="M61,25 L72,37 M210,73 L226,69.5 M92,173 L85.5,182" stroke="#444" stroke-width="0.5" fill="none"/>
</svg>
<div class="a" style="left:534px;top:453px;width:48px;height:47px;border-radius:11px;background:#c0c0c0"></div>
<svg style="left:534px;top:453px" width="48" height="47" fill="#5a5a5a"><circle cx="14" cy="23.5" r="3"/><circle cx="24" cy="23.5" r="3"/><circle cx="34" cy="23.5" r="3"/></svg>
<div class="a" style="left:200px;top:664px;width:48px;height:47px;border-radius:11px;background:#c0c0c0"></div>
<div class="t" style="left:200px;top:674px;width:48px;text-align:center;font-size:27px;color:#1a1a1a">2</div>

<!-- bottom bar -->
<div class="a" style="left:111px;top:1335px;width:532px;height:2px;background:#b2b2b2"></div>
<div class="a" style="left:144px;top:1353px;width:72px;height:72px;border-radius:14px;background:#b4b4b4"></div>
<svg style="left:144px;top:1353px" width="72" height="72" fill="none" stroke="#1a1a1a" stroke-width="3.3" stroke-linecap="round" stroke-linejoin="round">
  <path d="M50,24.5 V50.5 M43,37.5 H24 M30.5,31 L24,37.5 L30.5,44"/>
</svg>
<div class="a" style="left:240px;top:1352px;width:398px;height:72px;border-radius:15px;background:#3d61c0"></div>
<svg style="left:240px;top:1352px" width="398" height="72" fill="none" stroke="#c4c4c4" stroke-width="2.8" stroke-linecap="round">
  <path d="M72,24.5 V48.5 M60,36.5 H84"/>
</svg>
<div class="t" style="left:344px;top:1375px;font-size:26.5px;color:#c2c2c2">Добавить страницу</div>

<!-- ============ CANVAS (right of modal) ============ -->
<div class="a" style="left:1880px;top:158px;width:121px;height:2px;background:#afafaf"></div>
<div class="a" style="left:1880px;top:161px;width:121px;height:1276px;background:#b4b4b4"></div>
<div class="a" style="left:1860px;top:357px;width:101px;height:886px;border-radius:9px;background-color:#c0c0c0;border:1px solid #a9a9a9"></div>
<div class="a" style="left:1861px;top:358px;width:77px;height:848px;background-image:radial-gradient(circle,#a6a6a6 0.9px,transparent 1.4px);background-size:18px 18px;background-position:4px 8px"></div>
<div class="a" style="left:1870px;top:379px;width:68px;height:50px;background-color:#8b9cc0;background-image:radial-gradient(circle,#7a8ab0 0.9px,transparent 1.4px);background-size:18px 18px;background-position:5px 9px"></div>
<div class="a" style="left:1870px;top:442px;width:68px;height:443px;border-radius:4px;background-color:#8b9cc0;background-image:radial-gradient(circle,#7a8ab0 0.9px,transparent 1.4px);background-size:18px 18px;background-position:5px 14px"></div>
<div class="t" style="left:1895px;top:445px;font-size:12px;color:#222;letter-spacing:0.5px">1500</div>
<div class="t" style="left:1895px;top:513px;font-size:12px;color:#222;letter-spacing:0.5px">1200</div>
<div class="t" style="left:1895px;top:582px;font-size:12px;color:#222;letter-spacing:0.5px">900</div>
<div class="t" style="left:1895px;top:650px;font-size:12px;color:#222;letter-spacing:0.5px">600</div>
<div class="t" style="left:1895px;top:719px;font-size:12px;color:#222;letter-spacing:0.5px">300</div>
<div class="t" style="left:1895px;top:787px;font-size:12px;color:#222;letter-spacing:0.5px">0</div>
<svg style="left:1912px;top:106px" width="30" height="30" fill="none" stroke="#1a1a1a" stroke-width="3" stroke-linejoin="round">
  <path d="M26.00,14.80 L26.00,15.01 L25.99,15.22 L25.98,15.43 L25.97,15.64 L25.95,15.85 L25.93,16.05 L25.91,16.26 L25.88,16.47 L25.85,16.68 L25.87,16.89 L25.98,17.13 L26.17,17.39 L26.42,17.67 L26.72,17.97 L27.04,18.29 L27.35,18.63 L27.63,18.97 L27.85,19.30 L27.99,19.62 L28.05,19.91 L28.00,20.18 L27.91,20.42 L27.81,20.66 L27.70,20.90 L27.59,21.14 L27.48,21.38 L27.37,21.61 L27.24,21.84 L27.12,22.07 L26.99,22.30 L26.86,22.53 L26.72,22.75 L26.58,22.97 L26.44,23.19 L26.29,23.40 L26.14,23.62 L25.98,23.83 L25.82,24.03 L25.66,24.24 L25.45,24.41 L25.17,24.51 L24.82,24.54 L24.42,24.52 L23.99,24.45 L23.55,24.35 L23.11,24.23 L22.70,24.12 L22.32,24.04 L22.00,24.01 L21.75,24.03 L21.55,24.13 L21.39,24.26 L21.22,24.38 L21.05,24.51 L20.88,24.63 L20.71,24.75 L20.54,24.86 L20.36,24.98 L20.18,25.09 L20.00,25.19 L19.82,25.30 L19.63,25.40 L19.45,25.49 L19.26,25.59 L19.07,25.68 L18.88,25.76 L18.69,25.85 L18.50,25.93 L18.30,26.00 L18.12,26.12 L17.97,26.34 L17.84,26.63 L17.73,26.99 L17.61,27.40 L17.49,27.84 L17.36,28.28 L17.21,28.68 L17.03,29.04 L16.82,29.33 L16.60,29.52 L16.35,29.62 L16.09,29.65 L15.83,29.69 L15.57,29.72 L15.31,29.74 L15.05,29.76 L14.79,29.78 L14.52,29.79 L14.26,29.80 L14.00,29.80 L13.74,29.80 L13.48,29.79 L13.21,29.78 L12.95,29.76 L12.69,29.74 L12.43,29.72 L12.17,29.69 L11.91,29.65 L11.65,29.62 L11.40,29.52 L11.18,29.33 L10.97,29.04 L10.79,28.68 L10.64,28.28 L10.51,27.84 L10.39,27.40 L10.27,26.99 L10.16,26.63 L10.03,26.34 L9.88,26.12 L9.70,26.00 L9.50,25.93 L9.31,25.85 L9.12,25.76 L8.93,25.68 L8.74,25.59 L8.55,25.49 L8.37,25.40 L8.18,25.30 L8.00,25.19 L7.82,25.09 L7.64,24.98 L7.46,24.86 L7.29,24.75 L7.12,24.63 L6.95,24.51 L6.78,24.38 L6.61,24.26 L6.45,24.13 L6.25,24.03 L6.00,24.01 L5.68,24.04 L5.30,24.12 L4.89,24.23 L4.45,24.35 L4.01,24.45 L3.58,24.52 L3.18,24.54 L2.83,24.51 L2.55,24.41 L2.34,24.24 L2.18,24.03 L2.02,23.83 L1.86,23.62 L1.71,23.40 L1.56,23.19 L1.42,22.97 L1.28,22.75 L1.14,22.53 L1.01,22.30 L0.88,22.07 L0.76,21.84 L0.63,21.61 L0.52,21.38 L0.41,21.14 L0.30,20.90 L0.19,20.66 L0.09,20.42 L-0.00,20.18 L-0.05,19.91 L0.01,19.62 L0.15,19.30 L0.37,18.97 L0.65,18.63 L0.96,18.29 L1.28,17.97 L1.58,17.67 L1.83,17.39 L2.02,17.13 L2.13,16.89 L2.15,16.68 L2.12,16.47 L2.09,16.26 L2.07,16.05 L2.05,15.85 L2.03,15.64 L2.02,15.43 L2.01,15.22 L2.00,15.01 L2.00,14.80 L2.00,14.59 L2.01,14.38 L2.02,14.17 L2.03,13.96 L2.05,13.75 L2.07,13.55 L2.09,13.34 L2.12,13.13 L2.15,12.92 L2.13,12.71 L2.02,12.47 L1.83,12.21 L1.58,11.93 L1.28,11.63 L0.96,11.31 L0.65,10.97 L0.37,10.63 L0.15,10.30 L0.01,9.98 L-0.05,9.69 L-0.00,9.42 L0.09,9.18 L0.19,8.94 L0.30,8.70 L0.41,8.46 L0.52,8.22 L0.63,7.99 L0.76,7.76 L0.88,7.53 L1.01,7.30 L1.14,7.07 L1.28,6.85 L1.42,6.63 L1.56,6.41 L1.71,6.20 L1.86,5.98 L2.02,5.77 L2.18,5.57 L2.34,5.36 L2.55,5.19 L2.83,5.09 L3.18,5.06 L3.58,5.08 L4.01,5.15 L4.45,5.25 L4.89,5.37 L5.30,5.48 L5.68,5.56 L6.00,5.59 L6.25,5.57 L6.45,5.47 L6.61,5.34 L6.78,5.22 L6.95,5.09 L7.12,4.97 L7.29,4.85 L7.46,4.74 L7.64,4.62 L7.82,4.51 L8.00,4.41 L8.18,4.30 L8.37,4.20 L8.55,4.11 L8.74,4.01 L8.93,3.92 L9.12,3.84 L9.31,3.75 L9.50,3.67 L9.70,3.60 L9.88,3.48 L10.03,3.26 L10.16,2.97 L10.27,2.61 L10.39,2.20 L10.51,1.76 L10.64,1.32 L10.79,0.92 L10.97,0.56 L11.18,0.27 L11.40,0.08 L11.65,-0.02 L11.91,-0.05 L12.17,-0.09 L12.43,-0.12 L12.69,-0.14 L12.95,-0.16 L13.21,-0.18 L13.48,-0.19 L13.74,-0.20 L14.00,-0.20 L14.26,-0.20 L14.52,-0.19 L14.79,-0.18 L15.05,-0.16 L15.31,-0.14 L15.57,-0.12 L15.83,-0.09 L16.09,-0.05 L16.35,-0.02 L16.60,0.08 L16.82,0.27 L17.03,0.56 L17.21,0.92 L17.36,1.32 L17.49,1.76 L17.61,2.20 L17.73,2.61 L17.84,2.97 L17.97,3.26 L18.12,3.48 L18.30,3.60 L18.50,3.67 L18.69,3.75 L18.88,3.84 L19.07,3.92 L19.26,4.01 L19.45,4.11 L19.63,4.20 L19.82,4.30 L20.00,4.41 L20.18,4.51 L20.36,4.62 L20.54,4.74 L20.71,4.85 L20.88,4.97 L21.05,5.09 L21.22,5.22 L21.39,5.34 L21.55,5.47 L21.75,5.57 L22.00,5.59 L22.32,5.56 L22.70,5.48 L23.11,5.37 L23.55,5.25 L23.99,5.15 L24.42,5.08 L24.82,5.06 L25.17,5.09 L25.45,5.19 L25.66,5.36 L25.82,5.57 L25.98,5.77 L26.14,5.98 L26.29,6.20 L26.44,6.41 L26.58,6.63 L26.72,6.85 L26.86,7.07 L26.99,7.30 L27.12,7.53 L27.24,7.76 L27.37,7.99 L27.48,8.22 L27.59,8.46 L27.70,8.70 L27.81,8.94 L27.91,9.18 L28.00,9.42 L28.05,9.69 L27.99,9.98 L27.85,10.30 L27.63,10.63 L27.35,10.97 L27.04,11.31 L26.72,11.63 L26.42,11.93 L26.17,12.21 L25.98,12.47 L25.87,12.71 L25.85,12.92 L25.88,13.13 L25.91,13.34 L25.93,13.55 L25.95,13.75 L25.97,13.96 L25.98,14.17 L25.99,14.38 L26.00,14.59 Z"/>
  <circle cx="14" cy="14.8" r="4.8"/>
</svg>
<svg style="left:1980px;top:100px" width="21" height="40" fill="none" stroke="#7e7e7e" stroke-width="2.6" stroke-linecap="round">
  <path d="M22,7 C14,7 7,8 7,11 C7,14 10,17 14,21 V34 H20"/>
</svg>

<!-- ============ RIGHT PANEL ============ -->
<div class="a" style="left:2000px;top:80px;width:526px;height:1357px;background:#c0c0c0;border-left:2px solid #a9a9a9;box-shadow:-3px 0 6px rgba(0,0,0,0.06)"></div>
<div class="t m" style="left:2025px;top:111px;font-size:30.5px;color:#1a1a1a">Селекторы</div>
<svg style="left:2438px;top:112px" width="30" height="30" fill="none" stroke="#1a1a1a" stroke-width="2.8" stroke-linecap="round" stroke-linejoin="round">
  <path d="M5.6,14.9 L12.7,21.9 L24.8,7.8" stroke-width="3"/>
</svg>
<svg style="left:2494px;top:112px" width="30" height="30" fill="none" stroke="#1a1a1a" stroke-width="2.8" stroke-linecap="round">
  <path d="M6.8,7.8 L22.7,23.9 M22.7,7.8 L6.8,23.9" stroke-width="3"/>
</svg>
<!-- illustration -->
<svg style="left:2120px;top:520px" width="320" height="320" viewBox="0 0 320 320">
  <path d="M133,42 Q137,29 150,31 L194,42 Q199,43 202,48 L225,89 Q228,95 226,101 L212,153 L150,166 L118,156 Q108,151 111,141 Z" fill="#95a0ad"/>
  <path d="M169,132 L162,106 Q159,102 155,100 L115,78 Q110,75 104,77 L64,88 Q53,92 54,104 L80,200 Q86,216 100,213 L145,201" fill="none" stroke="#111" stroke-width="2.2" stroke-linejoin="round"/>
  <g transform="rotate(15 80 225)"><rect x="50" y="197" width="62" height="52" rx="10" fill="none" stroke="#8394a6" stroke-width="7"/>
  <path d="M66,213 L76,222 L66,231 M82,236 H96" fill="none" stroke="#8394a6" stroke-width="7" stroke-linecap="round" stroke-linejoin="round"/></g>
  <path d="M145,146 a12,12 0 0 1 12,-14 h20 q8,0 13,6 l5,5 q3,3 9,3 h50 a13,13 0 0 1 13,13 v66 a13,13 0 0 1 -13,13 h-96 a13,13 0 0 1 -13,-13 z" fill="#4a6bc2"/>
  <path d="M239,29 C255,65 265,100 248,112 C238,120 222,118 213,109 C230,150 240,185 233,205 C228,220 210,226 200,218 C185,205 175,170 185,158 C195,148 208,165 209,190 C211,230 200,260 172,295" fill="none" stroke="#111" stroke-width="2.2" stroke-linecap="round"/>
</svg>
<div class="t" style="left:2001px;top:879px;width:560px;text-align:center;font-size:25.8px;line-height:36px;color:#1a1a1a;white-space:normal">Чтобы добавить селектор,<br>перетащите нужный блок с<br>панели снизу</div>
<div class="a" style="left:2001px;top:1334px;width:525px;height:2px;background:#b2b2b2"></div>
<svg style="left:2072px;top:1374px" width="34" height="32" fill="none" stroke="#1a1a1a" stroke-width="2.6" stroke-linecap="round">
  <path d="M4,9 H10 M20,9 H31 M4,23 H14 M24,23 H31"/>
  <circle cx="15" cy="9" r="4.5"/><circle cx="19" cy="23" r="4.5"/>
</svg>
<div class="t" style="left:2117px;top:1375px;font-size:26.5px;color:#1a1a1a">Селектор</div>
<div class="t" style="left:2280px;top:1373px;font-size:29px;-webkit-text-stroke:0.6px #1a1a1a;color:#1a1a1a">{ }</div>
<div class="t" style="left:2325px;top:1376px;font-size:25.3px;color:#1a1a1a">Селектор (JS)</div>

<!-- ============ SCROLLBAR ============ -->
<div class="a" style="left:2526px;top:3px;width:31px;height:1434px;background:#ffffff"></div>
<div class="a" style="left:2529px;top:33px;width:28px;height:1291px;background:#e3e3e3"></div>
<svg style="left:2526px;top:3px" width="31" height="1434"><path d="M11,18.5 L17.5,11 L24,18.5 Z" fill="#e3e3e3"/><path d="M11,1409 L17.5,1416.5 L24,1409 Z" fill="#e3e3e3"/></svg>

<!-- ============ MODAL ============ -->
<div class="a" style="left:643px;top:40px;width:1240px;height:1420px;background:#ffffff;border-radius:12px"></div>
<div class="t m" style="left:707px;top:85px;font-size:33.5px;color:#1f1f1f">Селектор (JS)</div>
<svg style="left:1800px;top:88px" width="40" height="34" fill="none" stroke="#222" stroke-width="3.6" stroke-linecap="round">
  <path d="M10,6.8 L30.1,27.1 M30.1,6.8 L10,27.1"/>
</svg>

<!-- card general -->
<div class="a" style="left:707px;top:198px;width:1112px;height:428px;border:2px solid #e5e5e5;border-radius:18px"></div>
<div class="t m" style="left:748px;top:243px;font-size:30.8px;color:#1f1f1f">Общие настройки</div>
<div class="t" style="left:748px;top:333px;font-size:26.6px;color:#1f1f1f">Заголовок</div>
<div class="a" style="left:1093px;top:320px;width:685px;height:55px;border:2px solid #e3e3e3;border-radius:12px"></div>
<div class="t" style="left:1110px;top:335px;font-size:26.2px;color:#1f1f1f">general-dash-selector</div>
<div class="t" style="left:748px;top:429px;font-size:26.6px;color:#1f1f1f">Источник</div>
<div class="a" style="left:1093px;top:416px;width:516px;height:56px;border:2px solid #e3e3e3;border-radius:12px"></div>
<div class="a" style="left:1116px;top:425px;width:38px;height:37px;border-radius:8px;background:#e38b20"></div>
<div class="t" style="left:1116px;top:428px;width:38px;text-align:center;font-size:26px;color:#fff;letter-spacing:1px">{ }</div>
<div class="t" style="left:1168px;top:431px;font-size:26.2px;color:#1f1f1f">general-dash-selector</div>
<div class="a" style="left:1625px;top:416px;width:152px;height:56px;border-radius:12px;background:#f2f2f2"></div>
<div class="t" style="left:1648px;top:431px;font-size:26.5px;color:#1f1f1f">Открыть</div>
<div class="a" style="left:1093px;top:488px;width:233px;height:56px;border:2px solid #e3e3e3;border-radius:12px"></div>
<div class="t" style="left:1117px;top:503px;font-size:25.8px;color:#1f1f1f">Указать ссылку</div>

<!-- card params -->
<div class="a" style="left:707px;top:656px;width:1112px;height:530px;border:2px solid #e5e5e5;border-radius:18px"></div>
<svg style="left:750px;top:704px" width="30" height="26" fill="none" stroke="#1f1f1f" stroke-width="3" stroke-linecap="round" stroke-linejoin="round">
  <path d="M5.5,20 L14.5,11 L23.5,20"/>
</svg>
<div class="t m" style="left:797px;top:700px;font-size:30.4px;color:#1f1f1f">Параметры</div>
<div class="t m" style="left:773px;top:780px;font-size:26.2px;color:#1f1f1f">Название</div>
<div class="t m" style="left:1156px;top:780px;font-size:26.4px;color:#1f1f1f">Значение</div>
<div class="a" style="left:748px;top:828px;width:1030px;height:2px;background:#e6e6e6"></div>
<div class="a" style="left:748px;top:910px;width:1030px;height:2px;background:#e6e6e6"></div>
<div class="a" style="left:748px;top:992px;width:1030px;height:2px;background:#e6e6e6"></div>
<div class="a" style="left:748px;top:1073px;width:1030px;height:2px;background:#e6e6e6"></div>
<div class="t" style="left:774px;top:858px;font-size:27px;color:#1f1f1f">fields</div>
<div class="t" style="left:774px;top:940px;font-size:27px;color:#1f1f1f">region</div>
<div class="t" style="left:774px;top:1021px;font-size:27px;color:#1f1f1f">scale</div>

<div class="a" style="left:1141px;top:843px;width:131px;height:56px;border-radius:12px;background:#f2f2f2"></div>
<div class="t" style="left:1164px;top:858px;font-size:27px;color:#444">hits</div>
<div class="a" style="left:1280px;top:843px;width:171px;height:56px;border-radius:12px;background:#f2f2f2"></div>
<div class="t" style="left:1303px;top:858px;font-size:27px;color:#444">visitors</div>
<div class="a" style="left:1141px;top:925px;width:123px;height:56px;border-radius:12px;background:#f2f2f2"></div>
<div class="t" style="left:1164px;top:940px;font-size:27px;color:#444">RU</div>
<div class="a" style="left:1141px;top:1007px;width:104px;height:55px;border-radius:12px;background:#f2f2f2"></div>
<div class="t" style="left:1164px;top:1021px;font-size:27px;color:#444">d</div>
<svg style="left:0;top:0" width="1500" height="1100" fill="none" stroke="#3b3b3b" stroke-width="3" stroke-linecap="square">
  <path d="M1234,862 L1252,880 M1252,862 L1234,880"/>
  <path d="M1414,862 L1432,880 M1432,862 L1414,880"/>
  <path d="M1226,944 L1244,962 M1244,944 L1226,962"/>
  <path d="M1207,1025 L1225,1043 M1225,1025 L1207,1043"/>
</svg>

<svg style="left:0;top:0" width="1800" height="1140" fill="none" stroke="#7a7a7a" stroke-width="3" stroke-linecap="round">
  <path d="M788.5,1104 V1127 M777,1115.5 H800"/>
</svg>
<div class="t" style="left:820px;top:1103px;font-size:26.3px;color:#7a7a7a">Добавить параметр</div>
<svg style="left:1560px;top:1097px" width="36" height="40" fill="none" stroke="#e60a0a" stroke-width="3" stroke-linecap="round" stroke-linejoin="round">
  <path d="M6.5,8.5 H29.5 M11.5,8.5 V6.5 a2.5,2.5 0 0 1 2.5,-2.5 h8 a2.5,2.5 0 0 1 2.5,2.5 V8.5 M9,8.5 L10,28.5 a3.5,3.5 0 0 0 3.5,3.5 h9 a3.5,3.5 0 0 0 3.5,-3.5 L27,8.5 M15,14 V26 M21,14 V26"/>
</svg>
<div class="t" style="left:1609px;top:1104px;font-size:25.1px;color:#e60a0a">Удалить все</div>

<!-- footer -->
<div class="t" style="left:1354px;top:1389px;font-size:26px;color:#1f1f1f">Отменить</div>
<div class="a" style="left:1563px;top:1365px;width:256px;height:72px;border-radius:15px;background:#5282ff"></div>
<div class="t" style="left:1626px;top:1389px;font-size:25.2px;-webkit-text-stroke:0.5px #fff;color:#fff">Сохранить</div>

<!-- frame bottom -->
<div class="a" style="left:0;top:1437px;width:2560px;height:3px;background:#d0d0d0"></div>
<div class="a" style="left:2557px;top:0;width:3px;height:1440px;background:#d0d0d0"></div>
<div class="a" style="left:0;top:0;width:2560px;height:3px;background:#d0d0d0"></div>
<div class="a" style="left:0;top:0;width:3px;height:1440px;background:#d0d0d0"></div>
</body></html>
